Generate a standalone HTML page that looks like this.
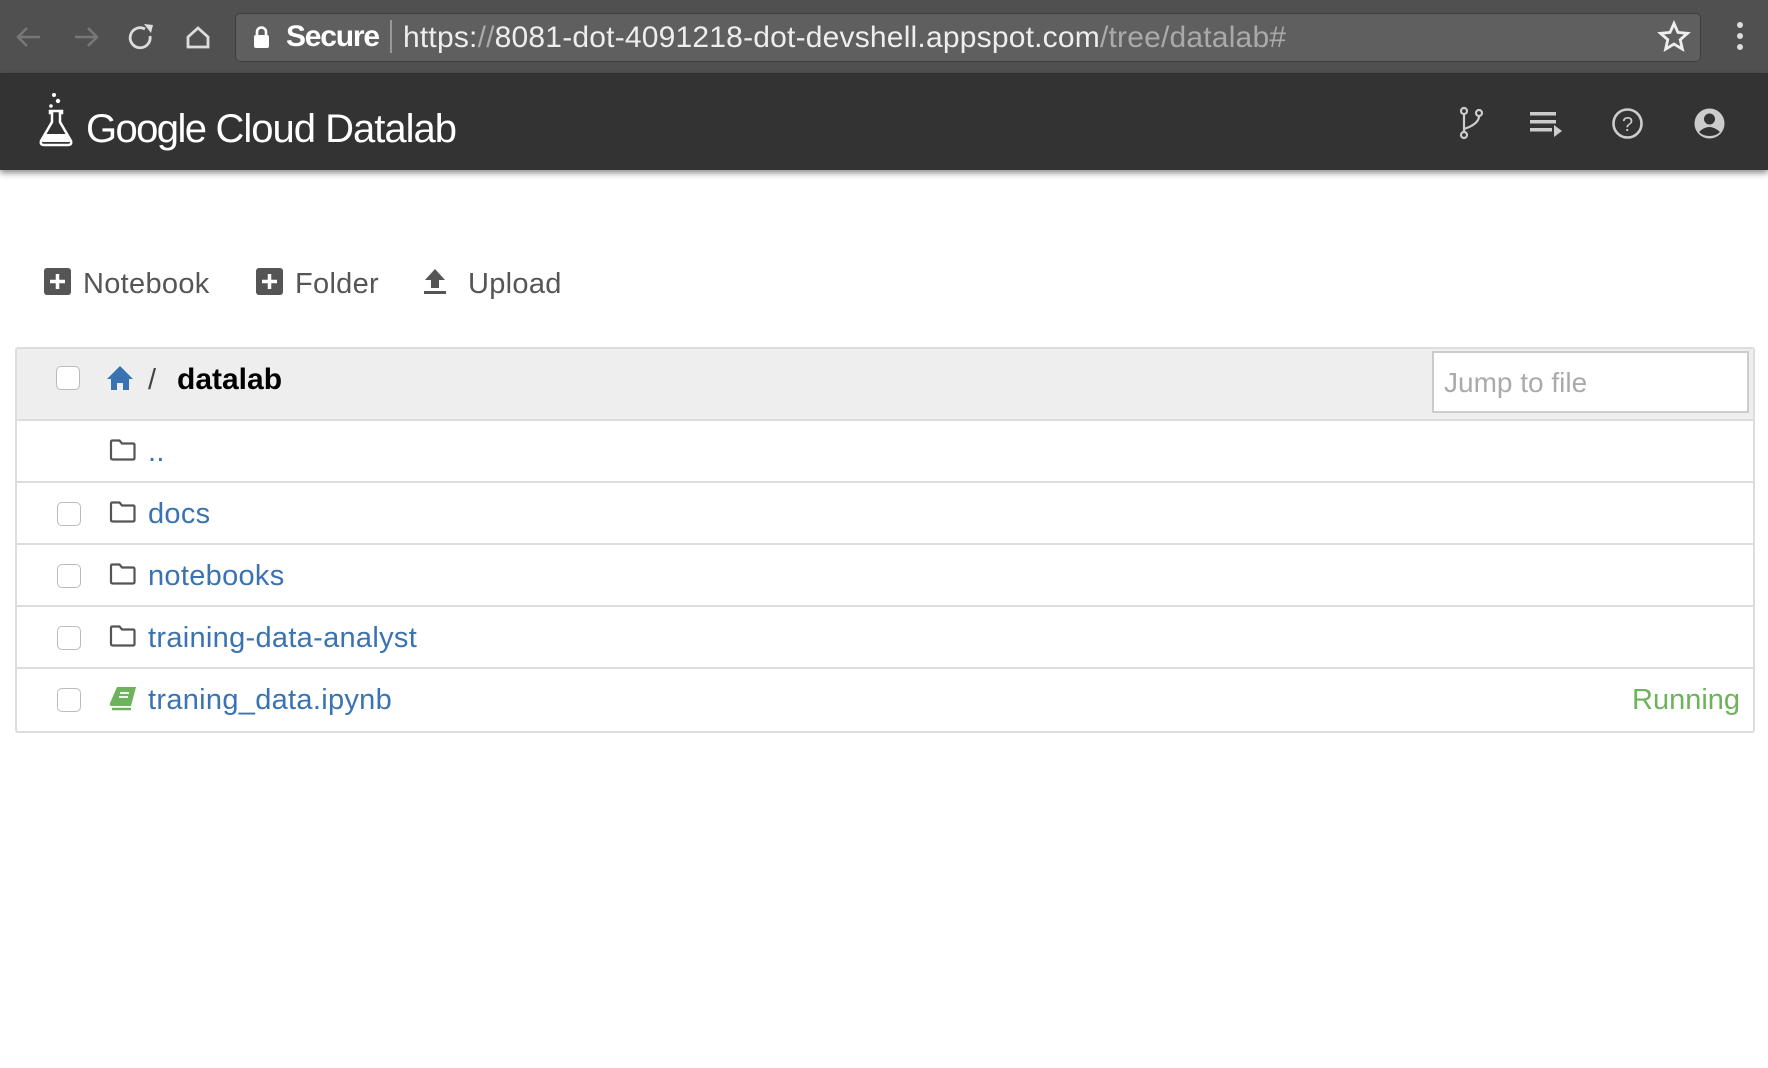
<!DOCTYPE html>
<html><head><meta charset="utf-8"><style>
*{margin:0;padding:0;box-sizing:border-box}
body{width:1768px;height:1068px;background:#fff;font-family:"Liberation Sans",sans-serif;position:relative;overflow:hidden}
.abs{position:absolute}
#chrome{left:0;top:0;width:1768px;height:73px;background:#505050}
#url{left:235px;top:13px;width:1466px;height:49px;background:#5f5f5f;border:1px solid #3e3e3e;border-radius:5px}
#hdr{left:0;top:73px;width:1768px;height:97px;background:#333;box-shadow:0 3px 6px rgba(0,0,0,.45)}
.tool{font-size:29px;color:#555;top:268px;letter-spacing:.3px}
.row{left:15px;width:1740px;height:62px;border-bottom:2px solid #ddd}
.cb{width:24px;height:24px;border:1.5px solid #bbb;border-radius:5px;background:#fff}
.name{font-size:29px;color:#3a73b1;left:148px;letter-spacing:.3px}
</style></head><body>
<div id="chrome" class="abs"></div>
<svg class="abs" style="left:12px;top:18px" width="240" height="40" viewBox="0 0 240 40">
<g fill="none" stroke="#777" stroke-width="2.6"><path d="M6 19h22M15 10l-9 9 9 9"/><path d="M63 19h22M76 10l9 9-9 9"/></g>
<g fill="none" stroke="#ddd" stroke-width="2.8"><path d="M133 11a10 10 0 1 0 5 7"/><path d="M176 29v-10l10-9 10 9v10z"/></g>
<path d="M132 6l9 1-2 8z" fill="#ddd"/>
</svg>
<div id="url" class="abs"></div>
<svg class="abs" style="left:252px;top:25px" width="20" height="25"><rect x="2" y="10" width="15" height="13" rx="2" fill="#fff"/><path d="M5 11V7a4.5 4.5 0 0 1 9 0v4" stroke="#fff" stroke-width="2.6" fill="none"/></svg>
<div class="abs" style="left:286px;top:20px;font-size:30px;color:#fff;font-weight:bold;letter-spacing:-1.2px">Secure</div>
<div class="abs" style="left:390px;top:20px;width:1.5px;height:33px;background:#999"></div>
<div class="abs" style="left:403px;top:21px;font-size:30px;color:#eee;letter-spacing:0.2px;white-space:nowrap">https:<span style="color:#aaa">//</span>8081-dot-4091218-dot-devshell.appspot.com<span style="color:#aaa">/tree/datalab#</span></div>
<svg class="abs" style="left:1657px;top:20px" width="34" height="34" viewBox="0 0 24 24"><path d="M12 2.5l2.8 6.3 6.7.6-5.1 4.5 1.5 6.6L12 17l-5.9 3.5 1.5-6.6-5.1-4.5 6.7-.6z" fill="none" stroke="#eee" stroke-width="2"/></svg>
<svg class="abs" style="left:1733px;top:20px" width="14" height="34"><circle cx="7" cy="5" r="3" fill="#ddd"/><circle cx="7" cy="16" r="3" fill="#ddd"/><circle cx="7" cy="27" r="3" fill="#ddd"/></svg>
<div id="hdr" class="abs"></div>
<svg class="abs" style="left:36px;top:92px" width="40" height="58" viewBox="0 0 40 58"><g fill="#fff"><circle cx="18" cy="3" r="2"/><circle cx="22" cy="9" r="2.2"/><circle cx="15" cy="14" r="1.8"/></g><path d="M14 19h12v2h-2v9l11 19q1 4-3 4H8q-4 0-3-4l11-19v-9h-2z" fill="none" stroke="#fff" stroke-width="2.5"/><path d="M10 42h20l4 8H6z" fill="#fff"/></svg>
<div class="abs" style="left:86px;top:107px;font-size:40px;color:#fff;letter-spacing:-1.6px;white-space:nowrap">Google<span style="letter-spacing:-1px"> Cloud Datalab</span></div>
<svg class="abs" style="left:1458px;top:106px" width="28" height="34" viewBox="0 0 28 34" fill="none" stroke="#ccc" stroke-width="2.2"><circle cx="6" cy="5" r="3"/><circle cx="21" cy="7" r="3"/><circle cx="6" cy="29" r="3"/><path d="M6 8v18M21 10q0 8-15 13"/></svg>
<svg class="abs" style="left:1528px;top:110px" width="36" height="28"><g fill="#ccc"><rect x="2" y="2" width="26" height="3.5"/><rect x="2" y="10" width="26" height="3.5"/><rect x="2" y="18" width="22" height="3.5"/><path d="M26 15l8 6-8 6z"/></g></svg>
<svg class="abs" style="left:1611px;top:107px" width="33" height="33" viewBox="0 0 33 33"><circle cx="16.5" cy="16.5" r="14" fill="none" stroke="#ccc" stroke-width="2.6"/><text x="16.5" y="24" text-anchor="middle" font-size="20" font-family="Liberation Sans" fill="#ccc">?</text></svg>
<svg class="abs" style="left:1693px;top:107px" width="33" height="33" viewBox="0 0 33 33"><circle cx="16.5" cy="16.5" r="15" fill="#ccc"/><circle cx="16.5" cy="12" r="5.5" fill="#333"/><path d="M6 25q10-10 21 0q-4 4-10.5 4T6 25z" fill="#333"/></svg>

<svg class="abs" style="left:44px;top:268px" width="27" height="27"><rect width="27" height="27" rx="3" fill="#555"/><path d="M13.5 6v15M6 13.5h15" stroke="#fff" stroke-width="3.5"/></svg>
<div class="abs tool" style="left:83px">Notebook</div>
<svg class="abs" style="left:256px;top:268px" width="27" height="27"><rect width="27" height="27" rx="3" fill="#555"/><path d="M13.5 6v15M6 13.5h15" stroke="#fff" stroke-width="3.5"/></svg>
<div class="abs tool" style="left:295px">Folder</div>
<svg class="abs" style="left:423px;top:268px" width="24" height="27"><path d="M12 1l10 11h-6v8H8v-8H2z" fill="#555"/><rect x="1" y="23" width="22" height="3" fill="#555"/></svg>
<div class="abs tool" style="left:468px">Upload</div>

<div class="abs" style="left:15px;top:347px;width:1740px;height:386px;border:2px solid #ddd;border-radius:3px"></div>
<div class="abs" style="left:17px;top:349px;width:1736px;height:72px;background:#eee;border-bottom:2px solid #ddd"></div>
<div class="abs cb" style="left:56px;top:366px"></div>
<svg class="abs" style="left:106px;top:365px" width="28" height="26"><path d="M14 1L1 14h4v11h6v-7h6v7h6V14h4z" fill="#3a73b1"/></svg>
<div class="abs" style="left:148px;top:364px;font-size:29px;color:#444">/</div>
<div class="abs" style="left:177px;top:363px;font-size:30px;color:#000;font-weight:bold">datalab</div>
<div class="abs" style="left:1432px;top:351px;width:317px;height:62px;background:#fff;border:2px solid #ccc"></div>
<div class="abs" style="left:1444px;top:367px;font-size:28px;color:#aaa">Jump to file</div>

<div class="abs row" style="top:421px"></div>
<div class="abs row" style="top:483px"></div>
<div class="abs row" style="top:545px"></div>
<div class="abs row" style="top:607px"></div>
<div class="abs row" style="top:669px;border-bottom:none"></div>

<svg class="abs" style="left:109px;top:439px" width="27" height="22"><path d="M2 3q0-1.5 1.5-1.5h7l2.5 3h11q1.5 0 1.5 1.5v13q0 1.5-1.5 1.5h-20Q2 20.5 2 19z" fill="none" stroke="#555" stroke-width="2.2"/></svg>
<div class="abs name" style="top:436px">..</div>

<div class="abs cb" style="left:57px;top:502px"></div>
<svg class="abs" style="left:109px;top:501px" width="27" height="22"><path d="M2 3q0-1.5 1.5-1.5h7l2.5 3h11q1.5 0 1.5 1.5v13q0 1.5-1.5 1.5h-20Q2 20.5 2 19z" fill="none" stroke="#555" stroke-width="2.2"/></svg>
<div class="abs name" style="top:498px">docs</div>

<div class="abs cb" style="left:57px;top:564px"></div>
<svg class="abs" style="left:109px;top:563px" width="27" height="22"><path d="M2 3q0-1.5 1.5-1.5h7l2.5 3h11q1.5 0 1.5 1.5v13q0 1.5-1.5 1.5h-20Q2 20.5 2 19z" fill="none" stroke="#555" stroke-width="2.2"/></svg>
<div class="abs name" style="top:560px">notebooks</div>

<div class="abs cb" style="left:57px;top:626px"></div>
<svg class="abs" style="left:109px;top:625px" width="27" height="22"><path d="M2 3q0-1.5 1.5-1.5h7l2.5 3h11q1.5 0 1.5 1.5v13q0 1.5-1.5 1.5h-20Q2 20.5 2 19z" fill="none" stroke="#555" stroke-width="2.2"/></svg>
<div class="abs name" style="top:622px">training-data-analyst</div>

<div class="abs cb" style="left:57px;top:688px"></div>
<svg class="abs" style="left:109px;top:686px" width="28" height="25"><path d="M8 1h19l-5 19H3q-3 0-2-3z" fill="#6db35b"/><path d="M3 23h19" stroke="#6db35b" stroke-width="2.5"/><path d="M11 7h9M10 11h9" stroke="#fff" stroke-width="1.8"/></svg>
<div class="abs name" style="top:684px">traning_data.ipynb</div>
<div class="abs" style="left:1632px;top:684px;font-size:29px;color:#6db35b">Running</div>
</body></html>
